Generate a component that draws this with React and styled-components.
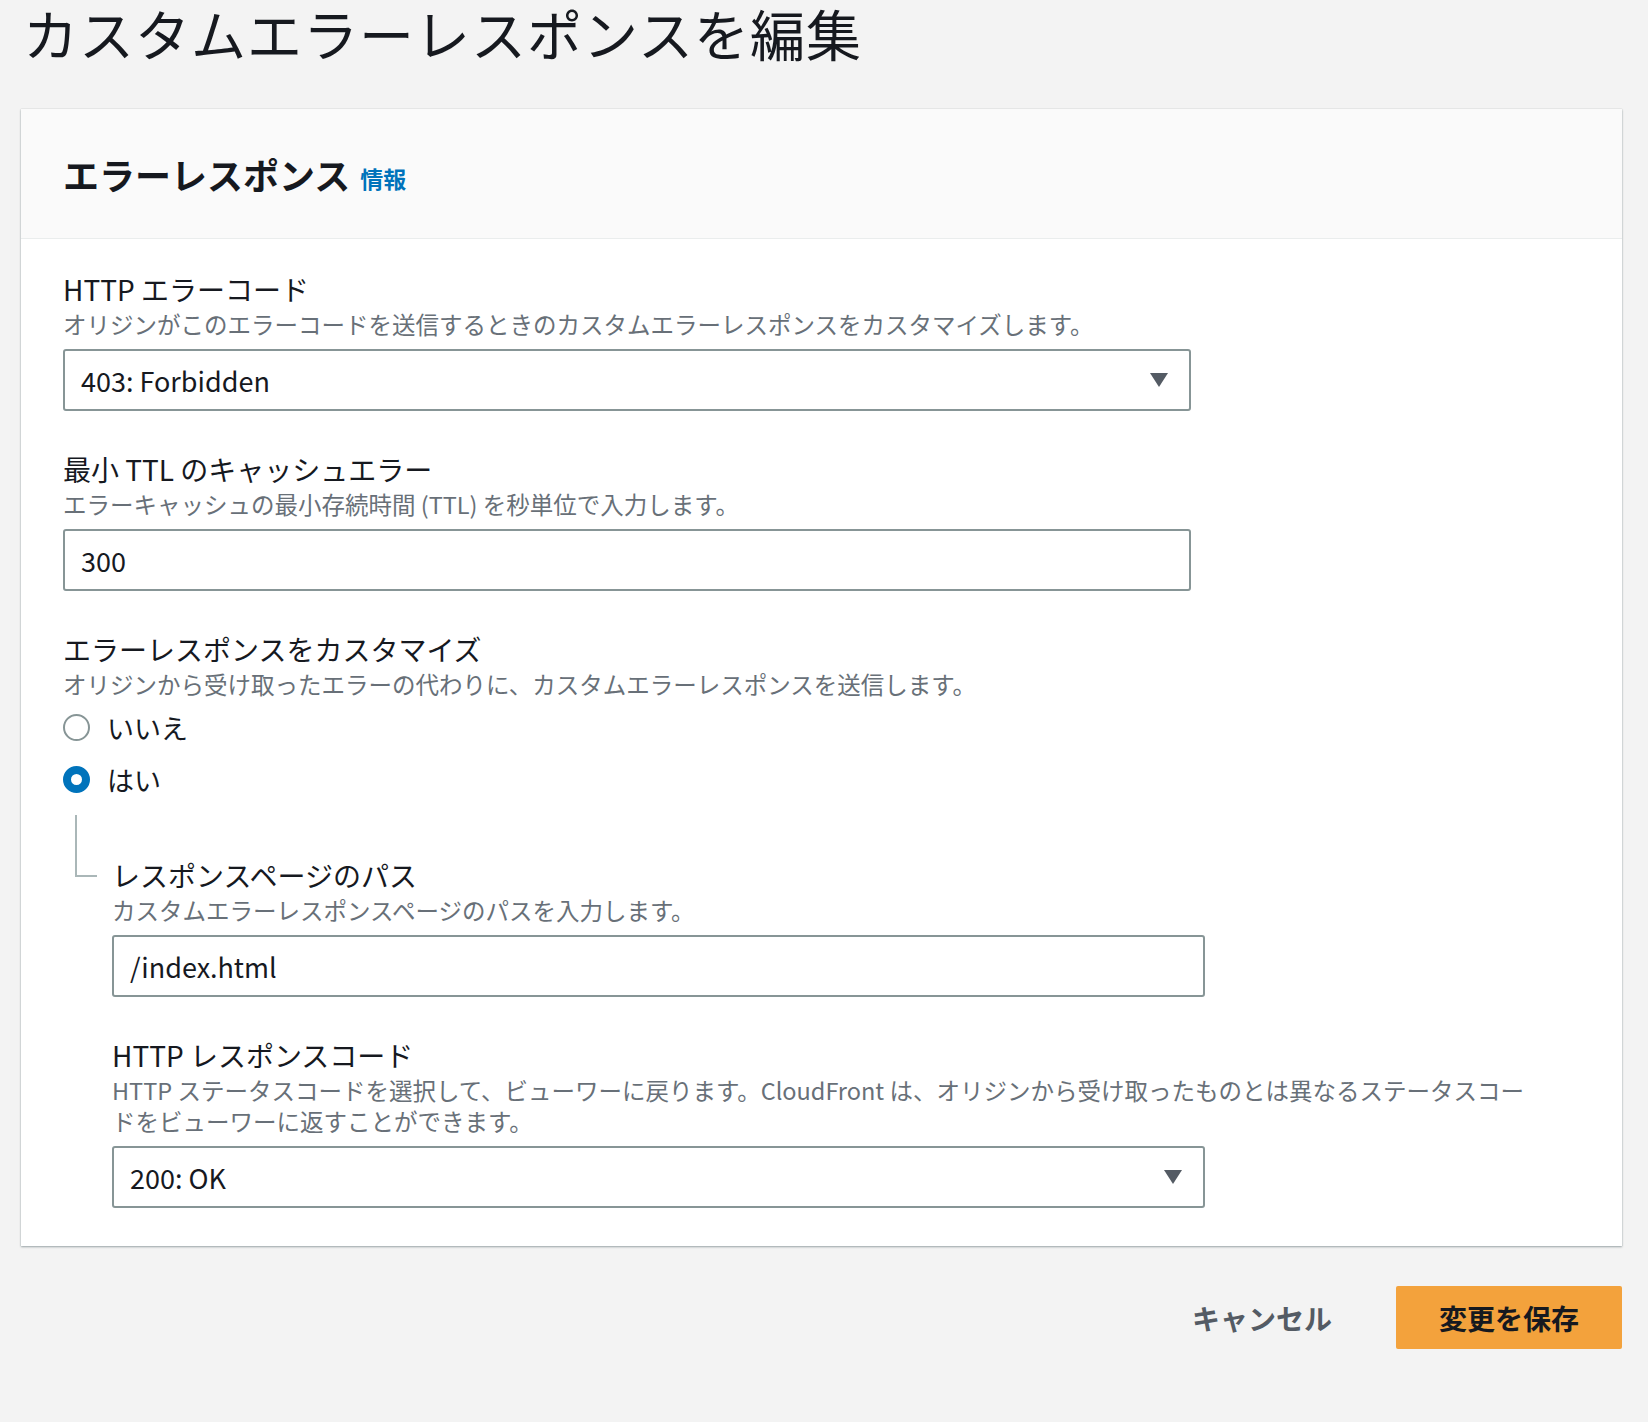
import React from 'react';
import styled, { createGlobalStyle } from 'styled-components';

const Global = createGlobalStyle`
  body {
    margin: 0;
    background: #f3f3f3;
    font-family: "Noto Sans CJK JP", "Noto Sans", sans-serif;
    color: #16191f;
  }
`;

const Page = styled.div`
  width: 1648px;
  height: 1422px;
  padding: 0 26px 0 21px;
  box-sizing: border-box;
  overflow: hidden;
`;

const Title = styled.h1`
  margin: 0;
  padding-left: 2px;
  font-size: 55px;
  font-weight: 400;
  line-height: 64px;
  letter-spacing: 1px;
`;

const Card = styled.section`
  margin-top: 45px;
  background: #fff;
  box-shadow: 0 1px 2px rgba(0, 28, 36, 0.35), 0 0 1px rgba(0, 28, 36, 0.2);
`;

const CardHeader = styled.div`
  height: 130px;
  box-sizing: border-box;
  background: #fafafa;
  border-bottom: 1px solid #eaeded;
  display: flex;
  align-items: center;
  padding: 0 42px;
  gap: 10px;
`;

const Heading = styled.h2`
  margin: 0;
  font-size: 36px;
  font-weight: 700;
`;

const Info = styled.a`
  font-size: 23px;
  font-weight: 700;
  color: #0073bb;
  margin-top: 8px;
`;

const Body = styled.div`
  padding: 30px 42px 38px 42px;
`;

const Field = styled.div`
  margin-bottom: ${p => p.$mb ?? 38}px;
  width: ${p => p.$w || 1128}px;
`;

const Label = styled.div`
  font-size: 28px;
  line-height: 40px;
`;

const Desc = styled.div`
  font-size: 23.5px;
  line-height: 31px;
  color: #687078;
  margin-bottom: 9px;
  white-space: ${p => (p.$wrap ? 'normal' : 'nowrap')};
`;

const Box = styled.div`
  height: 62px;
  box-sizing: border-box;
  border: 2px solid #879596;
  border-radius: 3px;
  display: flex;
  align-items: center;
  justify-content: space-between;
  padding: 0 20px 0 16px;
  font-size: 27px;
`;

const Caret = () => (
  <svg width="20" height="16" viewBox="0 0 20 16">
    <path d="M1 1h18L10 15z" fill="#545b64" />
  </svg>
);

const RadioRow = styled.label`
  display: flex;
  align-items: center;
  gap: 17px;
  font-size: 27px;
  height: 36px;
  margin-bottom: 16px;
`;

const Circle = styled.span`
  width: 27px;
  height: 27px;
  box-sizing: border-box;
  border-radius: 50%;
  border: ${p => (p.$on ? '8px solid #0073bb' : '2px solid #879596')};
  background: #fff;
`;

const Nested = styled.div`
  display: flex;
`;

const Tree = styled.div`
  width: 20px;
  margin-left: 12px;
  margin-top: 2px;
  height: 60px;
  border-left: 2px solid #aab7b8;
  border-bottom: 2px solid #aab7b8;
  flex-shrink: 0;
`;

const NestedBody = styled.div`
  margin-left: 15px;
  padding-top: 42px;
`;

const WideDesc = styled(Desc)`
  width: 1430px;
`;

const Footer = styled.div`
  display: flex;
  justify-content: flex-end;
  align-items: center;
  gap: 58px;
  margin-top: 40px;
`;

const Cancel = styled.button`
  border: none;
  background: none;
  font: inherit;
  font-size: 28px;
  font-weight: 700;
  color: #545b64;
`;

const Save = styled.button`
  width: 226px;
  height: 63px;
  border: none;
  border-radius: 2px;
  background: #f3a23c;
  font: inherit;
  font-size: 28px;
  font-weight: 700;
  color: #16191f;
`;

export default function App() {
  return (
    <Page>
      <Global />
      <Title>カスタムエラーレスポンスを編集</Title>
      <Card>
        <CardHeader>
          <Heading>エラーレスポンス</Heading>
          <Info>情報</Info>
        </CardHeader>
        <Body>
          <Field>
            <Label>HTTP エラーコード</Label>
            <Desc>オリジンがこのエラーコードを送信するときのカスタムエラーレスポンスをカスタマイズします。</Desc>
            <Box>403: Forbidden<Caret /></Box>
          </Field>
          <Field>
            <Label>最小 TTL のキャッシュエラー</Label>
            <Desc>エラーキャッシュの最小存続時間 (TTL) を秒単位で入力します。</Desc>
            <Box>300</Box>
          </Field>
          <Field $mb={0}>
            <Label>エラーレスポンスをカスタマイズ</Label>
            <Desc>オリジンから受け取ったエラーの代わりに、カスタムエラーレスポンスを送信します。</Desc>
            <RadioRow><Circle />いいえ</RadioRow>
            <RadioRow><Circle $on />はい</RadioRow>
          </Field>
          <Nested>
            <Tree />
            <NestedBody>
              <Field $w={1093}>
                <Label>レスポンスページのパス</Label>
                <Desc>カスタムエラーレスポンスページのパスを入力します。</Desc>
                <Box>/index.html</Box>
              </Field>
              <Field $w={1093} $mb={0}>
                <Label>HTTP レスポンスコード</Label>
                <WideDesc $wrap>
                  HTTP ステータスコードを選択して、ビューワーに戻ります。CloudFront は、オリジンから受け取ったものとは異なるステータスコードをビューワーに返すことができます。
                </WideDesc>
                <Box>200: OK<Caret /></Box>
              </Field>
            </NestedBody>
          </Nested>
        </Body>
      </Card>
      <Footer>
        <Cancel>キャンセル</Cancel>
        <Save>変更を保存</Save>
      </Footer>
    </Page>
  );
}
